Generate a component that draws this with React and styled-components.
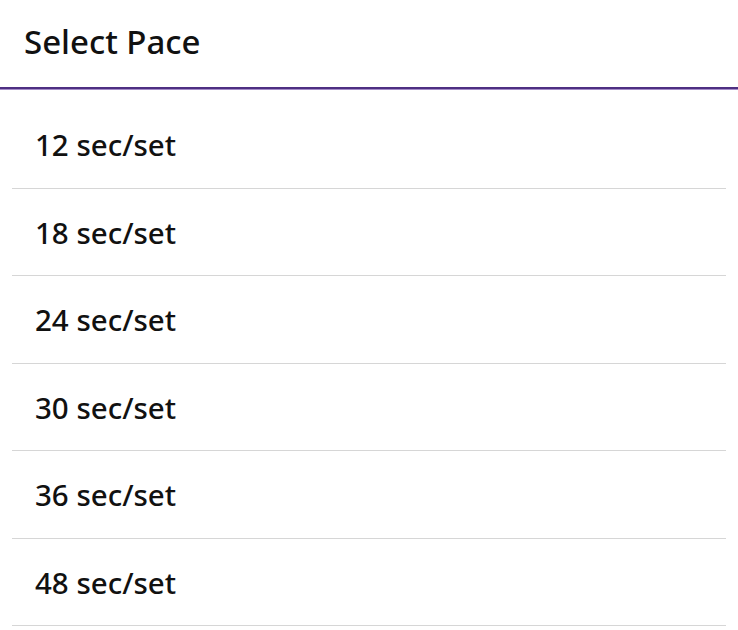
import React from "react";
import styled, { createGlobalStyle } from "styled-components";

const paces = [12, 18, 24, 30, 36, 48];

const App = () => {
	return (
		<Page>
			<GlobalStyle />
			<Header>
				<Title>Select Pace</Title>
			</Header>
			<List>
				{paces.map((p) => (
					<Row key={p}>
						<Label>{p} sec/set</Label>
					</Row>
				))}
			</List>
		</Page>
	);
};

export default App;

const GlobalStyle = createGlobalStyle`
	body {
		margin: 0;
		background: #fff;
		font-family: "Noto Sans", "Open Sans", sans-serif;
	}
`;

const Page = styled.div`
	width: 738px;
	height: 630px;
	background: #fff;
	overflow: hidden;
`;

const Header = styled.div`
	height: 87px;
	display: flex;
	align-items: center;
	padding-left: 24px;
	border-bottom: 2px solid #4e2f82;
	box-shadow: 0 1px 0 #a48cc8;
`;

const Title = styled.h1`
	margin: 0;
	margin-top: -5px;
	font-size: 33px;
	font-weight: 500;
	color: #111;
`;

const List = styled.div`
	display: flex;
	flex-direction: column;
	padding: 12px 12px 0;
`;

const Row = styled.div`
	height: 86.5px;
	display: flex;
	align-items: center;
	padding-left: 23px;
	border-bottom: 1px solid #d6d6d6;
	cursor: pointer;
`;

const Label = styled.span`
	font-size: 29.5px;
	font-weight: 500;
	color: #111;
	margin-top: 1px;
`;
